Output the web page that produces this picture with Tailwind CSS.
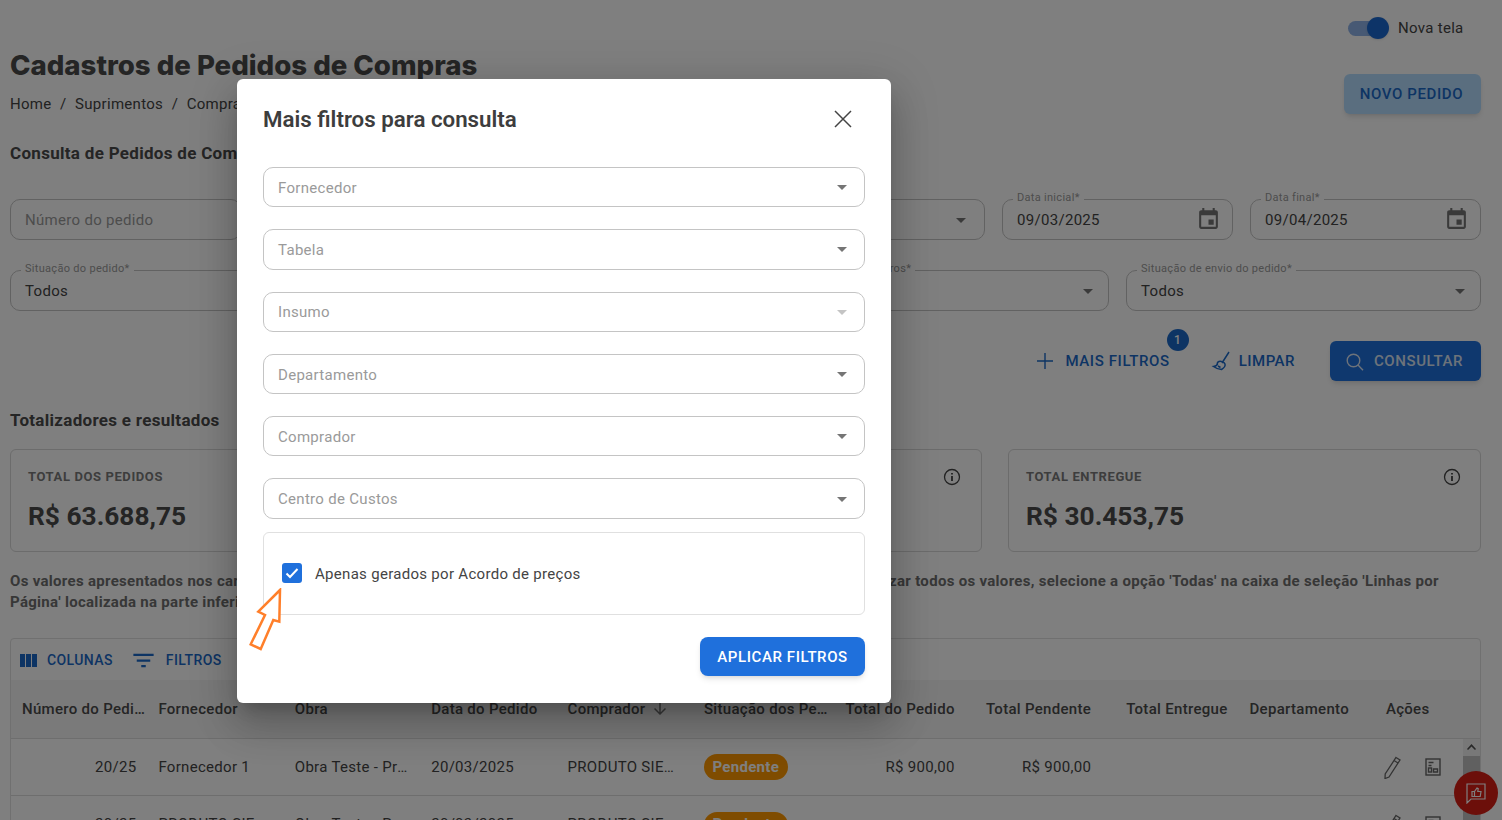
<!DOCTYPE html>
<html lang="pt-BR">
<head>
  <meta charset="UTF-8">
  <title>Cadastros de Pedidos de Compras</title>
  <script src="https://cdn.jsdelivr.net/npm/@tailwindcss/browser@4"></script>
</head>
<body class="bg-white font-['Roboto',sans-serif] text-[#444] tracking-[0.3px]">
<div class="relative w-[1502px] h-[820px] overflow-hidden">

  <!-- PAGINA -->
  <div class="pt-[17px] pl-[10px] pr-[21px]">
    <div class="flex justify-end items-center h-[22px] pr-[18px]">
      <div class="relative w-[37px] h-[15px] rounded-full bg-[#8fb3e8] mr-[13px]">
        <span class="absolute -right-[4px] -top-[3.5px] w-[22px] h-[22px] rounded-full bg-[#1b69d0] shadow"></span>
      </div>
      <span class="text-[15px] leading-none w-[65px] whitespace-nowrap">Nova tela</span>
    </div>

    <div class="flex justify-between mt-[9px]">
      <div>
        <h1 class="font-['Inter',sans-serif] font-extrabold text-[27.600px] leading-[34px] tracking-normal text-[#4a4a4a] whitespace-nowrap">Cadastros de Pedidos de Compras</h1>
        <div class="flex gap-x-[8.500px] mt-[12px] text-[15px] leading-[20px] whitespace-nowrap"><span>Home</span><span>/</span><span>Suprimentos</span><span>/</span><span>Compras</span></div>
      </div>
      <button class="mt-[26px] pt-[1px] pr-[2px] w-[137px] h-[40px] rounded-[6px] bg-[#b4ddff] text-[#1b69c8] text-[15px] font-medium tracking-[0.6px] shadow-md">NOVO PEDIDO</button>
    </div>

    <h2 class="mt-[29px] text-[17px] leading-[20px] font-bold text-[#4a4a4a]">Consulta de Pedidos de Compras</h2>

    <div class="grid grid-cols-6 gap-x-[17px] mt-[36px] w-[1471px]">
      <div class="h-[41px] rounded-[10px] border border-[#c4c4c4] flex items-center pl-[14px] text-[15px] text-[#9a9a9a]"><span class="pt-[2px]">Número do pedido</span></div>
      <div class="h-[41px] rounded-[10px] border border-[#c4c4c4]"></div>
      <div class="h-[41px] rounded-[10px] border border-[#c4c4c4]"></div>
      <div class="h-[41px] rounded-[10px] border border-[#c4c4c4] flex items-center justify-end pr-[11px]">
        <svg class="w-[24px] h-[24px] fill-[#757575]" viewBox="0 0 24 24"><path d="M7 10l5 5 5-5z"/></svg>
      </div>
      <div class="relative h-[41px] rounded-[10px] border border-[#c4c4c4] flex items-center justify-between pl-[14px] pr-[11px] text-[15px]">
        <span class="absolute left-[10px] -top-[9px] bg-white px-[4px] text-[11px] leading-[14px] text-[#9a9a9a]">Data inicial*</span>
        <span class="pt-[2px]">09/03/2025</span>
        <svg class="w-[25px] h-[25px] fill-[#757575]" viewBox="0 0 24 24"><path d="M17 12h-5v5h5v-5zM16 1v2H8V1H6v2H5c-1.11 0-1.99.9-1.99 2L3 19c0 1.1.89 2 2 2h14c1.1 0 2-.9 2-2V5c0-1.1-.9-2-2-2h-1V1h-2zm3 18H5V8h14v11z"/></svg>
      </div>
      <div class="relative h-[41px] rounded-[10px] border border-[#c4c4c4] flex items-center justify-between pl-[14px] pr-[11px] text-[15px]">
        <span class="absolute left-[10px] -top-[9px] bg-white px-[4px] text-[11px] leading-[14px] text-[#9a9a9a]">Data final*</span>
        <span class="pt-[2px]">09/04/2025</span>
        <svg class="w-[25px] h-[25px] fill-[#757575]" viewBox="0 0 24 24"><path d="M17 12h-5v5h5v-5zM16 1v2H8V1H6v2H5c-1.11 0-1.99.9-1.99 2L3 19c0 1.1.89 2 2 2h14c1.1 0 2-.9 2-2V5c0-1.1-.9-2-2-2h-1V1h-2zm3 18H5V8h14v11z"/></svg>
      </div>
    </div>

    <div class="grid grid-cols-4 gap-x-[17px] mt-[30px] w-[1471px]">
      <div class="relative h-[41px] rounded-[10px] border border-[#c4c4c4] flex items-center pl-[14px] text-[15px]">
        <span class="absolute left-[10px] -top-[9px] bg-white px-[4px] text-[11px] leading-[14px] text-[#9a9a9a]">Situação do pedido*</span>
        <span class="pt-[2px]">Todos</span>
      </div>
      <div class="h-[41px] rounded-[10px] border border-[#c4c4c4]"></div>
      <div class="relative h-[41px] rounded-[10px] border border-[#c4c4c4] flex items-center justify-end pr-[8px]">
        <span class="absolute left-[10px] -top-[9px] bg-white px-[4px] text-[11px] leading-[14px] text-[#9a9a9a] whitespace-nowrap">Situação dos outros filtros*</span>
        <svg class="w-[24px] h-[24px] fill-[#757575]" viewBox="0 0 24 24"><path d="M7 10l5 5 5-5z"/></svg>
      </div>
      <div class="relative h-[41px] rounded-[10px] border border-[#c4c4c4] flex items-center justify-between pl-[14px] pr-[8px] text-[15px]">
        <span class="absolute left-[10px] -top-[9px] bg-white px-[4px] text-[11px] leading-[14px] text-[#9a9a9a]">Situação de envio do pedido*</span>
        <span class="pt-[2px]">Todos</span>
        <svg class="w-[24px] h-[24px] fill-[#757575]" viewBox="0 0 24 24"><path d="M7 10l5 5 5-5z"/></svg>
      </div>
    </div>

    <div class="flex justify-end items-center mt-[30px] h-[40px] w-[1471px]">
      <div class="relative flex items-center text-[15px] font-medium tracking-[0.6px] text-[#1b69c8]">
        <svg class="w-[20px] h-[20px] mr-[10px] stroke-[#1b69c8] fill-none" stroke-width="1.4" viewBox="0 0 20 20"><path d="M10 2v16M2 10h16"/></svg>
        <span class="pt-[1px]">MAIS FILTROS</span>
        <span class="absolute -right-[19px] -top-[20px] w-[22px] h-[22px] rounded-full bg-[#1b69c8] text-white text-[12px] font-medium flex items-center justify-center">1</span>
      </div>
      <div class="flex items-center ml-[41px] text-[15px] font-medium tracking-[0.5px] text-[#1b69c8]">
        <svg class="w-[20px] h-[20px] mr-[8px] stroke-[#1b69c8] fill-none" stroke-width="1.500" viewBox="0 0 20 20"><path d="M18 1L11 12M8 10.500c2-.5 5 .5 6 2.500.5 2-1 4-3.500 5.500-2.500-.2-6-1.500-8-3 2-.2 3.500-1 4-2.500-.5-.5-.5-1.500 1.500-2.500zM7 15l2.500 1.500"/></svg>
        <span class="pt-[1px]">LIMPAR</span>
      </div>
      <button class="ml-[35px] pt-[1px] pr-[2px] w-[151px] h-[40px] rounded-[6px] bg-[#1f70dc] text-[#dbe6f5] text-[15px] font-medium tracking-[0.6px] shadow-md flex items-center justify-center gap-[10px]">
        <svg class="w-[18px] h-[18px] stroke-[#dbe6f5] fill-none" stroke-width="1.4" viewBox="0 0 18 18"><circle cx="7.500" cy="7.500" r="6.300"/><path d="M12 12l5 5.300"/></svg>
        CONSULTAR
      </button>
    </div>

    <h2 class="mt-[29px] text-[17px] leading-[20px] font-bold text-[#4a4a4a]">Totalizadores e resultados</h2>

    <div class="grid grid-cols-3 gap-x-[26px] mt-[19px] w-[1471px]">
      <div class="relative h-[103px] rounded-[6px] border border-[#d8d8d8] pl-[17px] pt-[20px]">
        <div class="text-[13px] leading-[14px] font-bold tracking-[0.6px] text-[#7a7a7a]">TOTAL DOS PEDIDOS</div>
        <div class="mt-[15px] text-[26.300px] leading-[34px] font-bold tracking-normal text-[#4a4a4a]">R$ 63.688,75</div>
      </div>
      <div class="relative h-[103px] rounded-[6px] border border-[#d8d8d8] pl-[17px] pt-[20px]">
        <svg class="absolute right-[20px] top-[18px] w-[18px] h-[18px] stroke-[#444] fill-none" stroke-width="1.300" viewBox="0 0 18 18"><circle cx="9" cy="9" r="7.500"/><path d="M9 8v5M9 5v1.500" stroke-width="1.800"/></svg>
      </div>
      <div class="relative h-[103px] rounded-[6px] border border-[#d8d8d8] pl-[17px] pt-[20px]">
        <div class="text-[13px] leading-[14px] font-bold tracking-[0.6px] text-[#7a7a7a]">TOTAL ENTREGUE</div>
        <div class="mt-[15px] text-[26.300px] leading-[34px] font-bold tracking-normal text-[#4a4a4a]">R$ 30.453,75</div>
        <svg class="absolute right-[19px] top-[18px] w-[18px] h-[18px] stroke-[#444] fill-none" stroke-width="1.300" viewBox="0 0 18 18"><circle cx="9" cy="9" r="7.500"/><path d="M9 8v5M9 5v1.500" stroke-width="1.800"/></svg>
      </div>
    </div>

    <p class="mt-[19px] w-[1471px] text-[15px] leading-[21px] font-bold text-[#6e6e6e] whitespace-nowrap">Os valores apresentados nos cartões consideram apenas os registros da página atual, conforme os filtros ativos. Para visualizar todos os valores, selecione a opção 'Todas' na caixa de seleção 'Linhas por<br>Página' localizada na parte inferior da tabela.</p>

    <!-- TABELA -->
    <div class="mt-[25px] w-[1471px] h-[300px] border border-[#e0e0e0] rounded-t-[4px] text-[15px]">
      <div class="flex items-center h-[41px] pl-[6px] pt-[2px] text-[14px] font-medium tracking-[0.4px] text-[#1b69c8]">
        <svg class="w-[24px] h-[24px] fill-[#1b69c8] mr-[7px] -ml-[1px]" viewBox="0 0 24 24"><path d="M10 18h5V5h-5v13zm-6 0h5V5H4v13zM16 5v13h5V5h-5z"/></svg>
        COLUNAS
        <svg class="w-[27px] h-[27px] fill-[#1b69c8] ml-[17px] mr-[9px]" viewBox="0 0 24 24"><path d="M10 18h4v-2h-4v2zM3 6v2h18V6H3zm3 7h12v-2H6v2z"/></svg>
        FILTROS
      </div>
      <div class="grid grid-cols-[repeat(10,136.4px)_1fr] h-[59px] items-center bg-[#f5f5f5] border-b border-[#dcdcdc] font-medium text-[#4a4a4a]">
        <div class="pl-[11px] pr-[2px] truncate">Número do Pedido</div>
        <div class="px-[11px]">Fornecedor</div>
        <div class="px-[11px]">Obra</div>
        <div class="px-[11px]">Data do Pedido</div>
        <div class="px-[11px] flex items-center">Comprador
          <svg class="w-[18px] h-[18px] fill-[#757575] ml-[6px]" viewBox="0 0 24 24"><path d="M20 12l-1.410-1.410L13 16.170V4h-2v12.170l-5.580-5.590L4 12l8 8 8-8z"/></svg>
        </div>
        <div class="pl-[11px] pr-0 truncate">Situação dos Pedidos</div>
        <div class="px-[11px] text-right whitespace-nowrap">Total do Pedido</div>
        <div class="px-[11px] text-right">Total Pendente</div>
        <div class="px-[11px] text-right">Total Entregue</div>
        <div class="px-[11px]">Departamento</div>
        <div class="px-[11px]">Ações</div>
      </div>
      <div class="grid grid-cols-[repeat(10,136.4px)_1fr] h-[57px] items-center border-b border-[#dcdcdc]">
        <div class="px-[11px] text-right">20/25</div>
        <div class="px-[11px]">Fornecedor 1</div>
        <div class="px-[11px] truncate">Obra Teste - Projeto</div>
        <div class="px-[11px]">20/03/2025</div>
        <div class="px-[11px] truncate">PRODUTO SIENGE</div>
        <div class="px-[11px]"><span class="inline-flex items-center h-[26px] px-[8.500px] rounded-full bg-[#ff9800] text-white font-bold">Pendente</span></div>
        <div class="px-[11px] text-right">R$ 900,00</div>
        <div class="px-[11px] text-right">R$ 900,00</div>
        <div></div>
        <div></div>
        <div class="flex items-center pl-[8px] gap-[22px]">
          <svg class="w-[20px] h-[24px] stroke-[#666] fill-none" stroke-width="1.300" viewBox="0 0 20 24"><path d="M13 2.500l4 2.500L6 22l-4 1.500.2-4.500zM11 5.500l4 2.500"/></svg>
          <svg class="w-[16px] h-[18px] stroke-[#666] fill-none" stroke-width="1.400" viewBox="0 0 16 18"><rect x="1" y="1" width="14" height="16"/><path d="M3.500 4.500h5M3.500 7.500h3"/><rect x="3.500" y="10" width="3" height="4"/><path d="M8.500 14h4v-3h-4z"/></svg>
        </div>
      </div>
      <div class="grid grid-cols-[repeat(10,136.4px)_1fr] h-[57px] items-center">
        <div class="px-[11px] text-right">20/25</div>
        <div class="px-[11px] truncate">PRODUTO SIENGE</div>
        <div class="px-[11px] truncate">Obra Teste - Projeto</div>
        <div class="px-[11px]">20/03/2025</div>
        <div class="px-[11px] truncate">PRODUTO SIENGE</div>
        <div class="px-[11px]"><span class="inline-flex items-center h-[26px] px-[8.500px] rounded-full bg-[#ff9800] text-white font-bold">Pendente</span></div>
        <div></div>
        <div></div>
        <div></div>
        <div></div>
        <div class="flex items-center pl-[8px] gap-[22px]">
          <svg class="w-[20px] h-[24px] stroke-[#666] fill-none" stroke-width="1.300" viewBox="0 0 20 24"><path d="M13 2.500l4 2.500L6 22l-4 1.500.2-4.500zM11 5.500l4 2.500"/></svg>
          <svg class="w-[16px] h-[18px] stroke-[#666] fill-none" stroke-width="1.400" viewBox="0 0 16 18"><rect x="1" y="1" width="14" height="16"/><path d="M3.500 4.500h5M3.500 7.500h3"/><rect x="3.500" y="10" width="3" height="4"/><path d="M8.500 14h4v-3h-4z"/></svg>
        </div>
      </div>
    </div>
  </div>

  <!-- barra de rolagem da tabela -->
  <div class="absolute left-[1463px] top-[739px] w-[17px] h-[81px] bg-[#f1f1f1]">
    <svg class="w-[17px] h-[17px] fill-[#505050]" viewBox="0 0 17 17"><path d="M8.500 5L13 10l-1 1-3.500-3.500L5 11l-1-1z"/></svg>
    <div class="h-[64px] bg-[#c1c1c1]"></div>
  </div>

  <!-- botao de feedback -->
  <div class="absolute left-[1454px] top-[771px] w-[44px] h-[44px] rounded-full bg-[#d81e14] flex items-center justify-center">
    <svg class="w-[22px] h-[22px] stroke-white fill-none" stroke-width="1.200" viewBox="0 0 22 22"><path d="M2 2h18v15H6l-4 4zM7 9.500h2.500v5H7zM9.500 9.500L12 6l1.200.6-.4 2.900h3.200l-.8 5H9.500"/></svg>
  </div>

  <!-- OVERLAY -->
  <div class="absolute inset-0 bg-black/50"></div>

  <!-- MODAL -->
  <div class="absolute left-[237px] top-[79px] w-[654px] h-[624px] bg-white rounded-[6px] shadow-[0_11px_15px_-7px_rgba(0,0,0,.2),0_24px_38px_3px_rgba(0,0,0,.14),0_9px_46px_8px_rgba(0,0,0,.12)] px-[26px] pt-[26px]">
    <div class="flex items-center justify-between h-[28px]">
      <h3 class="text-[22.300px] leading-[28px] font-semibold tracking-normal text-[#3d3d3d]">Mais filtros para consulta</h3>
      <svg class="w-[20px] h-[20px] mr-[12px] stroke-[#444] fill-none" stroke-width="1.500" viewBox="0 0 20 20"><path d="M2 2l16 16M18 2L2 18"/></svg>
    </div>
    <div class="mt-[34px] flex flex-col gap-y-[22px]">
      <div class="h-[40.300px] rounded-[10px] border border-[#c4c4c4] flex items-center justify-between pl-[14px] pr-[10px] text-[15px] text-[#9a9a9a]"><span class="pt-[2px]">Fornecedor</span>
        <svg class="w-[24px] h-[24px] fill-[#757575]" viewBox="0 0 24 24"><path d="M7 10l5 5 5-5z"/></svg>
      </div>
      <div class="h-[40.300px] rounded-[10px] border border-[#c4c4c4] flex items-center justify-between pl-[14px] pr-[10px] text-[15px] text-[#9a9a9a]"><span class="pt-[2px]">Tabela</span>
        <svg class="w-[24px] h-[24px] fill-[#757575]" viewBox="0 0 24 24"><path d="M7 10l5 5 5-5z"/></svg>
      </div>
      <div class="h-[40.300px] rounded-[10px] border border-[#c4c4c4] flex items-center justify-between pl-[14px] pr-[10px] text-[15px] text-[#9a9a9a]"><span class="pt-[2px]">Insumo</span>
        <svg class="w-[24px] h-[24px] fill-[#c4c4c4]" viewBox="0 0 24 24"><path d="M7 10l5 5 5-5z"/></svg>
      </div>
      <div class="h-[40.300px] rounded-[10px] border border-[#c4c4c4] flex items-center justify-between pl-[14px] pr-[10px] text-[15px] text-[#9a9a9a]"><span class="pt-[2px]">Departamento</span>
        <svg class="w-[24px] h-[24px] fill-[#757575]" viewBox="0 0 24 24"><path d="M7 10l5 5 5-5z"/></svg>
      </div>
      <div class="h-[40.300px] rounded-[10px] border border-[#c4c4c4] flex items-center justify-between pl-[14px] pr-[10px] text-[15px] text-[#9a9a9a]"><span class="pt-[2px]">Comprador</span>
        <svg class="w-[24px] h-[24px] fill-[#757575]" viewBox="0 0 24 24"><path d="M7 10l5 5 5-5z"/></svg>
      </div>
      <div class="h-[40.300px] rounded-[10px] border border-[#c4c4c4] flex items-center justify-between pl-[14px] pr-[10px] text-[15px] text-[#9a9a9a]"><span class="pt-[2px]">Centro de Custos</span>
        <svg class="w-[24px] h-[24px] fill-[#757575]" viewBox="0 0 24 24"><path d="M7 10l5 5 5-5z"/></svg>
      </div>
    </div>
    <div class="mt-[13px] h-[83px] rounded-[6px] border border-[#e0e0e0] flex items-center pl-[18px] text-[15px] text-[#444]">
      <span class="w-[20px] h-[20px] rounded-[3px] bg-[#1f70dc] flex items-center justify-center mr-[13px]">
        <svg class="w-[14px] h-[14px] stroke-white fill-none" stroke-width="2" viewBox="0 0 14 14"><path d="M1.500 7.500l3.500 3.500 7.500-8"/></svg>
      </span>
      <span class="pt-[2px]">Apenas gerados por Acordo de preços</span>
    </div>
    <div class="flex justify-end mt-[22px]">
      <button class="w-[165px] h-[39px] pt-[2px] rounded-[8px] bg-[#1f70dc] text-white text-[15px] font-medium tracking-[0.6px] shadow-md">APLICAR FILTROS</button>
    </div>
    <svg class="absolute left-[11px] top-[509px] w-[40px] h-[70px] stroke-[#ff7f2a] fill-white" stroke-width="2.500" viewBox="0 0 40 70"><path d="M32 2L10.300 23.700 17 27 2.700 56.300 12.700 61 25.300 32 31.300 33.700z"/></svg>
  </div>
</div>
</body>
</html>
